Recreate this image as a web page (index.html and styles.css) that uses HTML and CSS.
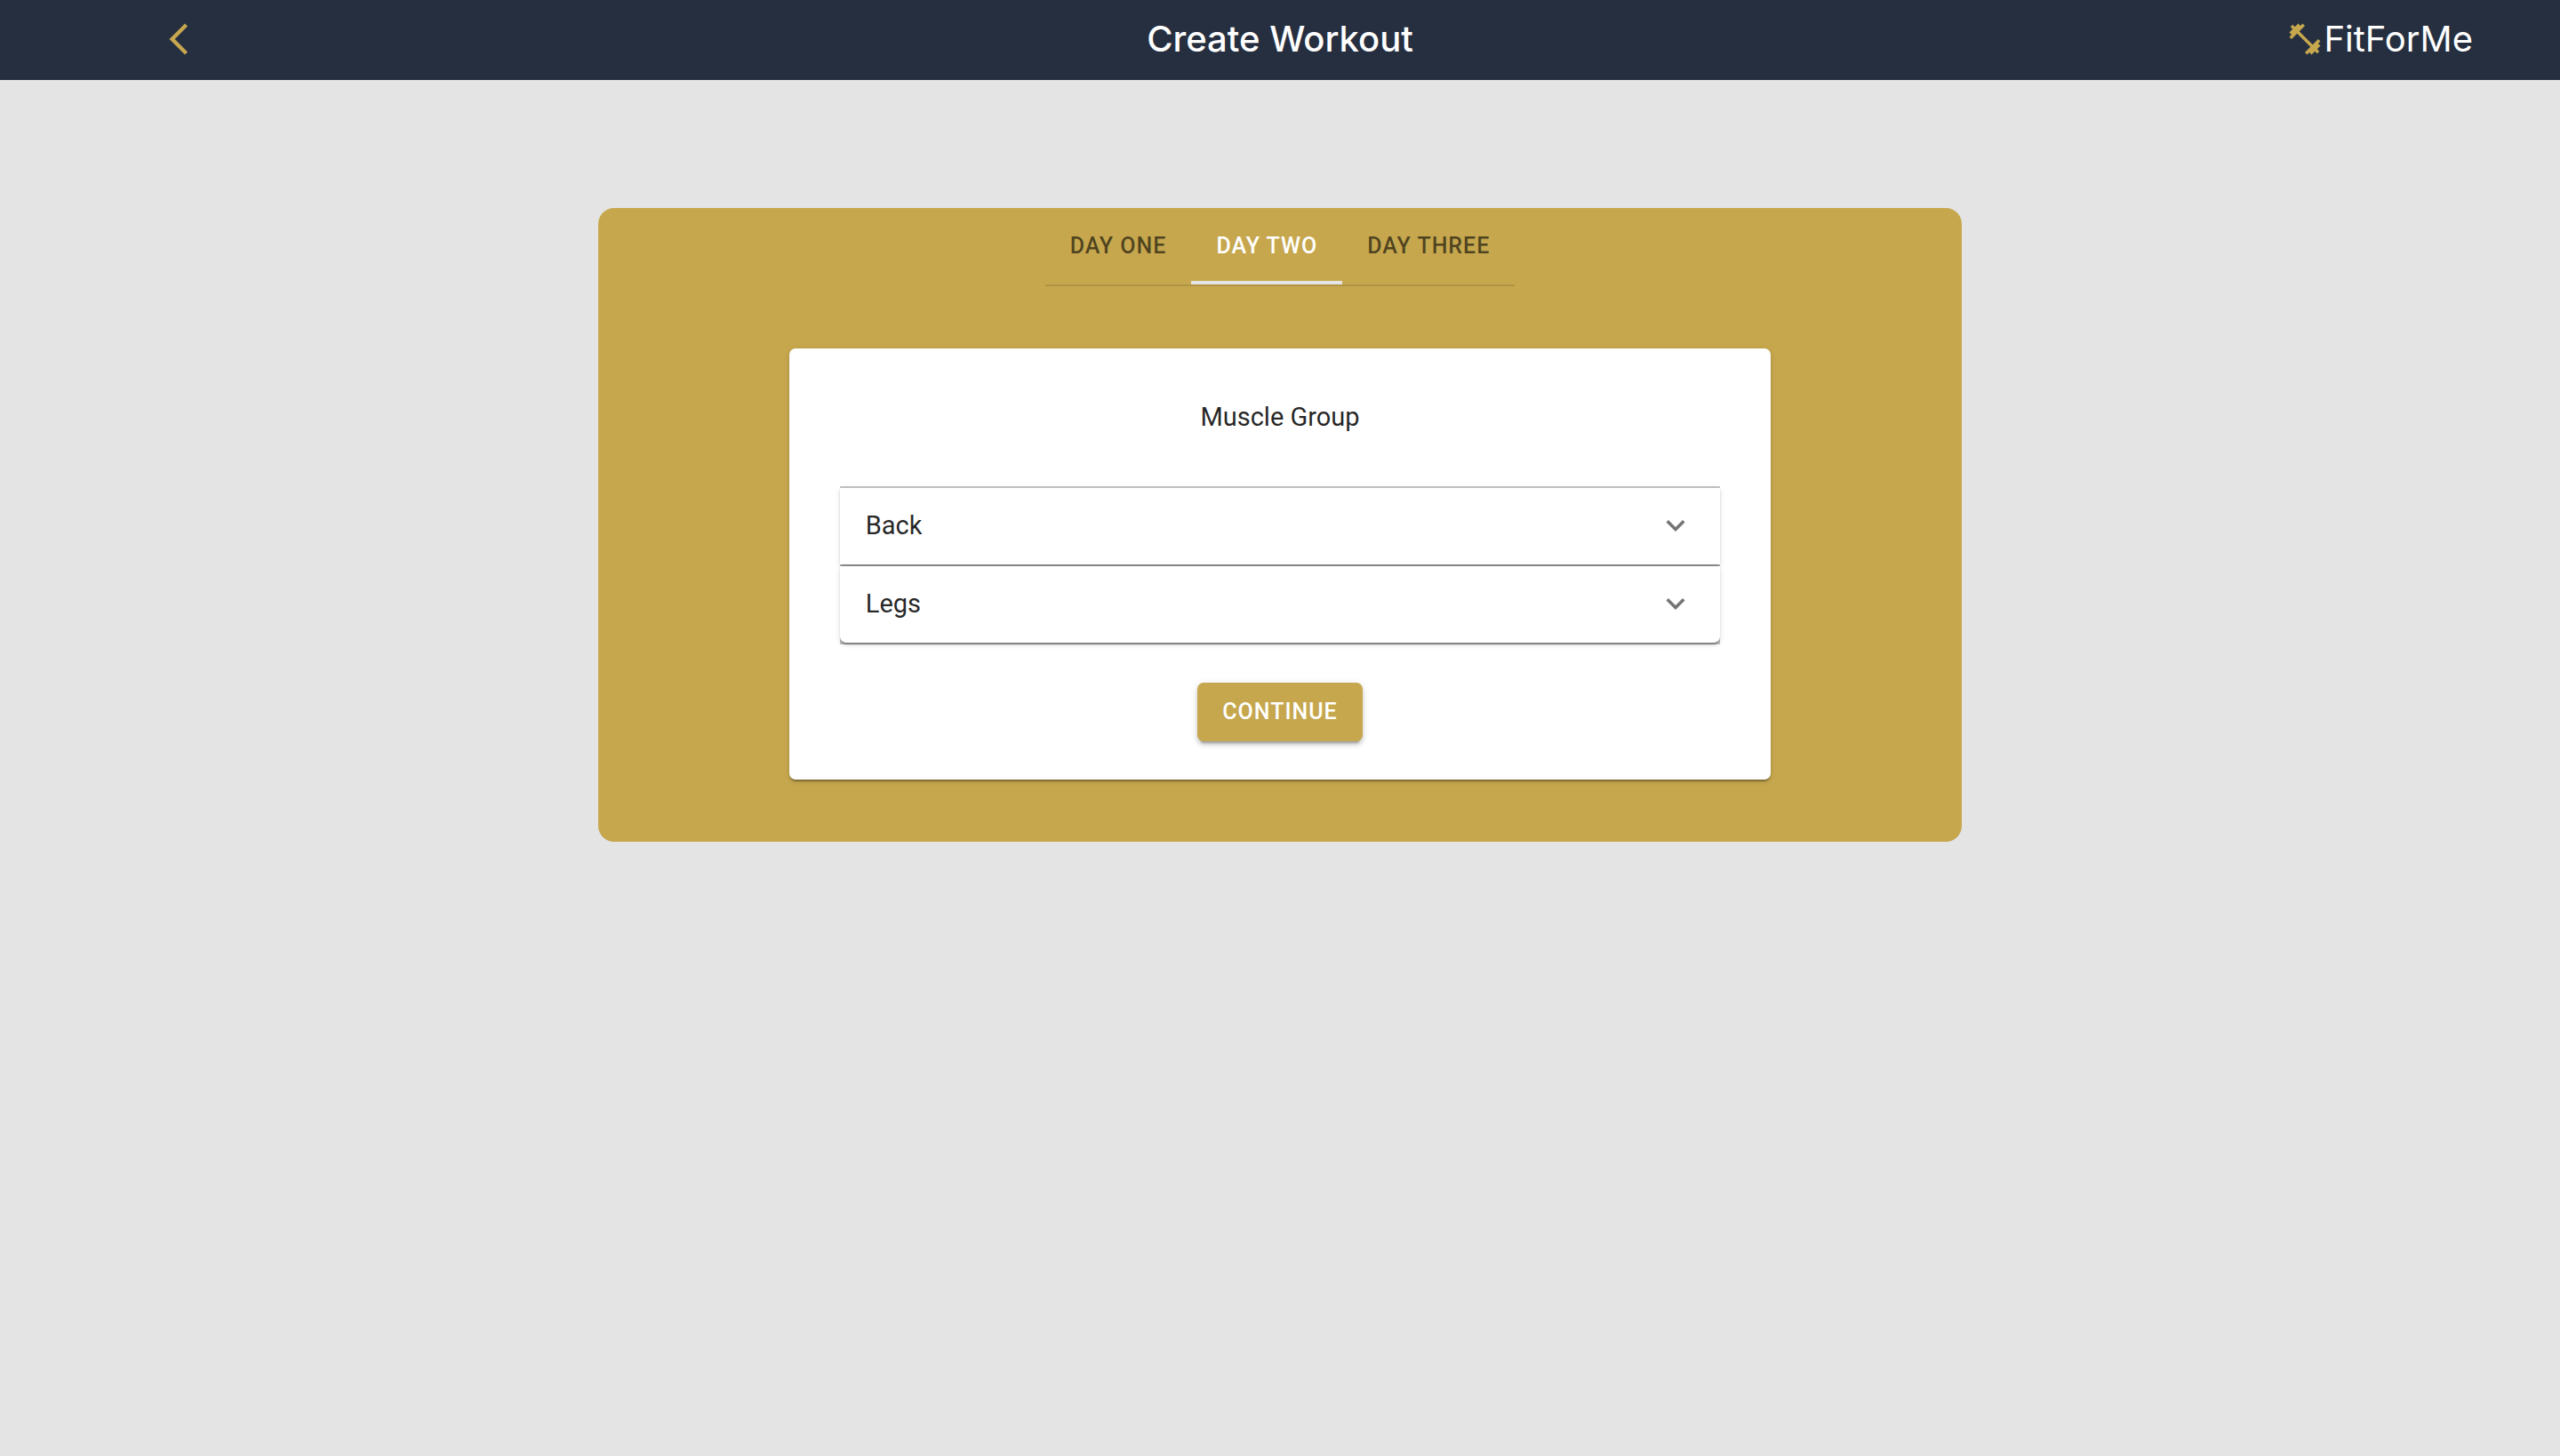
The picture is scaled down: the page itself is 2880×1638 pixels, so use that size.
FILE: index.html
```html
<!DOCTYPE html>
<html lang="en">
<head>
<meta charset="utf-8">
<meta name="viewport" content="width=device-width, initial-scale=1">
<title>Create Workout - FitForMe</title>
<link rel="stylesheet" href="styles.css">
</head>
<body>
<header class="app-bar">
  <a class="back" href="#" aria-label="Back">
    <svg class="icon" viewBox="0 0 24 24" aria-hidden="true"><path d="M17.77 3.77 16 2 6 12l10 10 1.77-1.77L9.54 12z"/></svg>
  </a>
  <h1 class="title">Create Workout</h1>
  <a class="brand" href="#">
    <svg class="icon" viewBox="0 0 24 24" aria-hidden="true"><path d="M20.57 14.86 22 13.43 20.57 12 17 15.57 8.43 7 12 3.43 10.57 2 9.14 3.43 7.71 2 5.57 4.14 4.14 2.71 2.71 4.14l1.43 1.43L2 7.71l1.43 1.43L2 10.57 3.43 12 7 8.43 15.57 17 12 20.57 13.43 22l1.43-1.43L16.29 22l2.14-2.14 1.43 1.43 1.43-1.43-1.43-1.43L22 16.29z"/></svg>
    <span class="brand-name">FitForMe</span>
  </a>
</header>
<main class="panel">
  <div class="tabs" role="tablist">
    <button class="tab" type="button" role="tab" aria-selected="false">DAY ONE</button>
    <button class="tab tab-active" type="button" role="tab" aria-selected="true">DAY TWO</button>
    <button class="tab" type="button" role="tab" aria-selected="false">DAY THREE</button>
  </div>
  <section class="card">
    <h2 class="card-title">Muscle Group</h2>
    <div class="accordion">
      <button class="accordion-item" type="button" aria-expanded="false">
        <span>Back</span>
        <svg class="icon" viewBox="0 0 24 24" aria-hidden="true"><path d="M16.59 8.59 12 13.17 7.41 8.59 6 10l6 6 6-6z"/></svg>
      </button>
      <button class="accordion-item" type="button" aria-expanded="false">
        <span>Legs</span>
        <svg class="icon" viewBox="0 0 24 24" aria-hidden="true"><path d="M16.59 8.59 12 13.17 7.41 8.59 6 10l6 6 6-6z"/></svg>
      </button>
    </div>
    <button class="continue" type="button">CONTINUE</button>
  </section>
</main>
</body>
</html>
```
FILE: styles.css
```css
* {
  box-sizing: border-box;
}

body {
  margin: 0;
  background: #e4e4e4;
  color: rgba(0, 0, 0, 0.87);
  font-family: Roboto, "Liberation Sans", sans-serif;
  font-size: 29px;
}

button {
  border: 0;
  font: inherit;
  color: inherit;
  cursor: pointer;
}

a {
  color: inherit;
  text-decoration: none;
}

.icon {
  display: block;
  flex: none;
  width: 42px;
  height: 42px;
  fill: currentColor;
}

.app-bar {
  display: grid;
  grid-template-columns: 1fr auto 1fr;
  align-items: center;
  height: 90px;
  padding: 0 98px 2px;
  background: #262f40;
  color: #fff;
  font-family: Inter, "Liberation Sans", sans-serif;
}

.back {
  justify-self: start;
  margin-left: 82px;
  color: #c6a74e;
}

.title {
  margin: 0;
  font-size: 40px;
  font-weight: 500;
  line-height: 52px;
}

.brand {
  display: flex;
  align-items: center;
  justify-self: end;
  color: #c6a74e;
}

.brand-name {
  color: #fff;
  font-size: 40px;
  font-weight: 400;
  line-height: 52px;
}

.panel {
  display: flex;
  flex-direction: column;
  align-items: center;
  gap: 70px;
  width: min(100%, 1534px);
  margin: 144px auto;
  padding-bottom: 70px;
  border-radius: 18px;
  background: #c6a74e;
}

.tabs {
  display: flex;
  border-bottom: 2px solid #b09445;
}

.tab {
  height: 86px;
  padding: 4px 28px 0;
  border-bottom: 4px solid transparent;
  background: none;
  color: rgba(0, 0, 0, 0.6);
  font-size: 25px;
  font-weight: 500;
  letter-spacing: 1px;
  line-height: 32px;
}

.tab-active {
  border-bottom-color: #e4e4e4;
  color: #fff;
}

.card {
  display: flex;
  flex-direction: column;
  align-items: center;
  width: 72%;
  padding: 56px 57px 43px;
  border-radius: 7px;
  background: #fff;
  box-shadow: 0 4px 2px -2px rgba(0, 0, 0, 0.2), 0 2px 2px rgba(0, 0, 0, 0.14), 0 2px 6px rgba(0, 0, 0, 0.12);
}

.card-title {
  margin: 0 0 57px;
  font-size: 29px;
  font-weight: 400;
  line-height: 42px;
}

.accordion {
  display: flex;
  flex-direction: column;
  gap: 2px;
  align-self: stretch;
  margin-bottom: 43px;
  padding: 2px 0;
  background: #c2c2c2;
}

.accordion-item {
  display: flex;
  align-items: center;
  justify-content: space-between;
  height: 86px;
  padding: 0 29px 2px;
  background: #fff;
  line-height: 42px;
  box-shadow: 0 4px 2px -2px rgba(0, 0, 0, 0.2), 0 2px 2px rgba(0, 0, 0, 0.14), 0 2px 6px rgba(0, 0, 0, 0.12);
}

.accordion-item:last-child {
  border-radius: 0 0 7px 7px;
}

.accordion-item .icon {
  color: #757575;
}

.continue {
  padding: 12px 28px;
  border-radius: 7px;
  background: #c6a74e;
  box-shadow: 0 6px 2px -4px rgba(0, 0, 0, 0.2), 0 4px 4px rgba(0, 0, 0, 0.14), 0 2px 10px rgba(0, 0, 0, 0.12);
  color: #fff;
  font-size: 25px;
  font-weight: 500;
  letter-spacing: 1px;
  line-height: 42px;
}
```
